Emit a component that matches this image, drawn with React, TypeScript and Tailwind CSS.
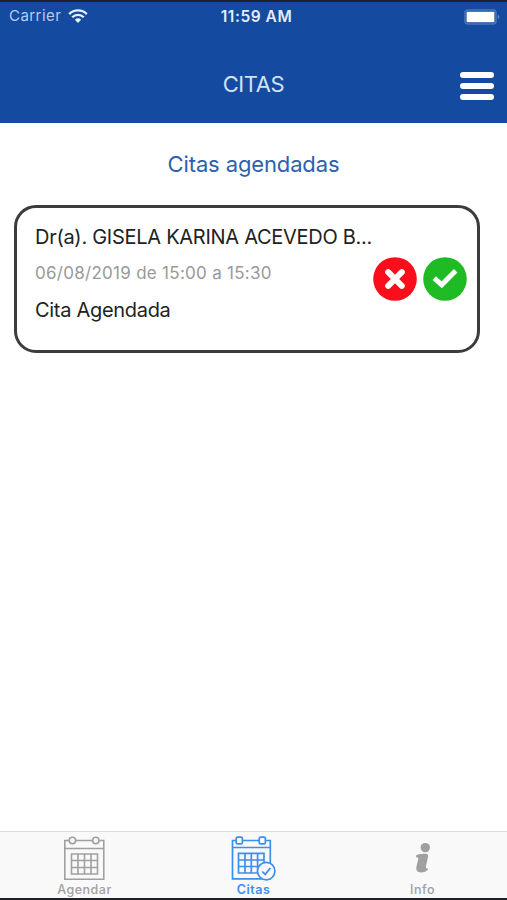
import type { ReactNode } from "react";

const WifiIcon = () => (
  <svg width="20" height="15" viewBox="0 0 20 15" className="text-[#e9f0fb]" fill="currentColor">
    <path d="M10 14 L6.9 10.7 A4.5 4.5 0 0 1 13.1 10.7 Z" />
    <g fill="none" stroke="currentColor" strokeWidth="2.3">
      <path d="M4.2 8.3 A8.2 8.2 0 0 1 15.8 8.3" />
      <path d="M1.2 5.1 A12.4 12.4 0 0 1 18.8 5.1" />
    </g>
  </svg>
);

const BatteryIcon = () => (
  <svg width="37" height="16" viewBox="0 0 37 16">
    <rect x="1" y="1" width="31" height="14" rx="3" fill="none" stroke="#4a75b8" strokeWidth="1.6" />
    <rect x="2.6" y="2.8" width="27.8" height="10.4" rx="0.8" fill="#fff" />
    <path d="M33.8 5.5 Q37 8 33.8 10.5 Z" fill="#5f86c3" />
  </svg>
);

const CalendarIcon = () => (
  <svg width="46" height="46" viewBox="0 0 46 46" fill="none" stroke="currentColor" strokeWidth="1.6">
    <path d="M7 4.5 H2.8 V43.3 H41.8 V4.5 H37.5 M13.5 4.5 H30.5 M2.8 12.5 H41.8" />
    <circle cx="10.4" cy="4.5" r="3.2" />
    <circle cx="33.8" cy="4.5" r="3.2" />
    <path d="M9.5 18 H35.5 V38 H9.5 Z M9.5 24.5 H35.5 M9.5 31.5 H35.5 M16 18 V38 M22.5 18 V38 M29 18 V38" />
  </svg>
);

const CalendarCheckIcon = () => (
  <svg width="46" height="46" viewBox="0 0 46 46" fill="none" stroke="currentColor" strokeWidth="1.7">
    <path d="M5 4.5 H1.5 V42.8 H39.3 V4.5 H34.8 M11.5 4.5 H28 M1.5 11.5 H39.3" />
    <rect x="5.2" y="1.2" width="6.2" height="6.6" rx="1.4" />
    <rect x="28.2" y="1.2" width="6.2" height="6.6" rx="1.4" />
    <path d="M7.5 17.3 H33 V37 H7.5 Z M7.5 24 H33 M7.5 30.5 H33 M14 17.3 V37 M20.3 17.3 V37 M26.6 17.3 V37" />
    <circle cx="35.2" cy="35.1" r="8.7" fill="#f9f9f9" />
    <path d="M31.2 35.5 L34.2 38.4 L39.4 32" />
  </svg>
);

const InfoIcon = () => (
  <svg width="18" height="36" viewBox="0 0 18 36" fill="currentColor" className="mb-[4px]">
    <circle cx="11.3" cy="5.6" r="4.7" />
    <path d="M2 14.2 Q1.8 13.2 3.8 12.6 Q8 11.5 12 11.8 Q14.8 12.3 14 15.2 L11.9 24.3 Q11.4 26.9 13.8 26.5 Q14.6 26.8 13.7 27.9 Q11 30.4 7 30.4 Q1.3 30.2 2.3 25.3 L4.2 17.2 Q4.7 15.3 3.2 15.4 Q2 15.4 2 14.2 Z" />
  </svg>
);

const TabItem = ({ label, active = false, children }: { label: string; active?: boolean; children: ReactNode }) => (
  <button
    className={
      active
        ? "flex flex-1 flex-col items-center justify-end text-[#3c8fec]"
        : "flex flex-1 flex-col items-center justify-end text-[#a0a0a0]"
    }
  >
    {children}
    <span className={active ? "text-[12.5px] leading-4 font-semibold tracking-[0.5px]" : "text-[12.5px] leading-4 font-medium tracking-[0.5px]"}>
      {label}
    </span>
  </button>
);

const App = () => {
  return (
    <div className="flex h-[900px] w-[507px] flex-col overflow-hidden border-y-2 border-[#20202a] bg-white font-['Inter',sans-serif]">
      <header className="flex h-[121px] flex-col bg-[#144a9f]">
        {/* Status bar */}
        <div className="grid h-[28px] grid-cols-3 items-center pt-px pr-[6px] pl-[9px] text-[#e3ecfa]">
          <div className="flex items-center gap-[7px]">
            <span className="text-[15px] tracking-[0.45px] text-[#b9cdec]">Carrier</span>
            <WifiIcon />
          </div>
          <span className="pl-[3px] text-center text-[15.5px] font-semibold tracking-[0.55px] whitespace-nowrap">11:59 AM</span>
          <div className="flex justify-end">
            <BatteryIcon />
          </div>
        </div>
        {/* Title bar */}
        <div className="grid flex-1 grid-cols-[1fr_auto_1fr] items-center px-[13px] pt-[15px]">
          <h1 className="col-start-2 text-[22px] tracking-[-0.4px] text-[#d3e0f5]">CITAS</h1>
          <button className="flex flex-col gap-[5px] justify-self-end pt-[4px]">
            <span className="h-[6px] w-[34px] rounded-full bg-white" />
            <span className="h-[6px] w-[34px] rounded-full bg-white" />
            <span className="h-[6px] w-[34px] rounded-full bg-white" />
          </button>
        </div>
      </header>

      <main className="flex-1 pt-[25px]">
        <h2 className="text-center text-[22px] leading-8 tracking-[-0.13px] text-[#2d61ae]">Citas agendadas</h2>
        <section className="mt-[25px] ml-[14px] flex h-[148px] w-[466px] rounded-[22px] border-[3px] border-[#3c3c3c] px-[18px] pt-[15px]">
          <div className="flex-1 whitespace-nowrap">
            <p className="w-[338px] text-[20px] leading-7 tracking-[-0.28px] text-[#222]">Dr(a). GISELA KARINA ACEVEDO B...</p>
            <p className="mt-[10px] text-[17px] leading-6 tracking-[0.28px] text-[#999]">06/08/2019 de 15:00 a 15:30</p>
            <p className="mt-[11px] text-[20px] leading-7 tracking-[-0.3px] text-[#222]">Cita Agendada</p>
          </div>
          <div className="-mr-[8px] flex gap-[6px] pt-[34px]">
            <button className="h-[44px] w-[44px]">
              <svg viewBox="0 0 44 44">
                <circle cx="22" cy="22" r="21.8" fill="#fc0d1b" />
                <path d="M15.2 15.2 L28.8 28.8 M28.8 15.2 L15.2 28.8" stroke="#fff" strokeWidth="6" strokeLinecap="round" />
              </svg>
            </button>
            <button className="h-[44px] w-[44px]">
              <svg viewBox="0 0 44 44">
                <circle cx="22" cy="22" r="21.8" fill="#1fbb25" />
                <path d="M11.2 21.2 L18.7 27.8 L32.7 13.7" fill="none" stroke="#fff" strokeWidth="5" />
              </svg>
            </button>
          </div>
        </section>
      </main>

      <nav className="flex h-[67px] border-t border-[#dcdcdc] bg-[#f9f9f9]">
        <TabItem label="Agendar">
          <CalendarIcon />
        </TabItem>
        <TabItem label="Citas" active>
          <CalendarCheckIcon />
        </TabItem>
        <TabItem label="Info">
          <InfoIcon />
        </TabItem>
      </nav>
    </div>
  );
};

export default App;
